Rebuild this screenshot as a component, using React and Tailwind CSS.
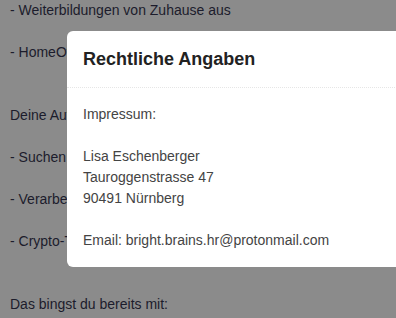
import React from "react";

const lines = [
  "- Weiterbildungen von Zuhause aus",
  "",
  "- HomeOffice möglich",
  "",
  "",
  "Deine Aufgaben:",
  "",
  "- Suchen und Finden von Informationen",
  "",
  "- Verarbeiten von Daten",
  "",
  "- Crypto-Transaktionen durchführen",
  "",
  "",
  "Das bingst du bereits mit:",
];

export default function App() {
  return (
    <div
      className="relative w-[396px] h-[318px] overflow-hidden bg-[#8b8b8b]"
      style={{ fontFamily: '"Liberation Sans", Arial, sans-serif' }}
    >
      <div className="px-[10px] text-[14px] leading-[21px] text-[#1c1c2c]">
        {lines.map((l, i) => (
          <div key={i} className="h-[21px] whitespace-nowrap">
            {l}
          </div>
        ))}
      </div>
      <div className="absolute left-[67px] top-[31px] w-[520px] bg-white rounded-[6px]">
        <div className="px-4 pt-[16px] pb-[16px] border-b border-dotted border-[#e6e6e6]">
          <h2 className="text-[18px] leading-[24px] font-bold text-[#222]">
            Rechtliche Angaben
          </h2>
        </div>
        <div className="px-4 py-4 text-[14px] leading-[21px] text-[#444]">
          <div>Impressum:</div>
          <div className="h-[21px]" />
          <div>Lisa Eschenberger</div>
          <div>Tauroggenstrasse 47</div>
          <div>90491 Nürnberg</div>
          <div className="h-[21px]" />
          <div>Email: bright.brains.hr@protonmail.com</div>
        </div>
      </div>
    </div>
  );
}
